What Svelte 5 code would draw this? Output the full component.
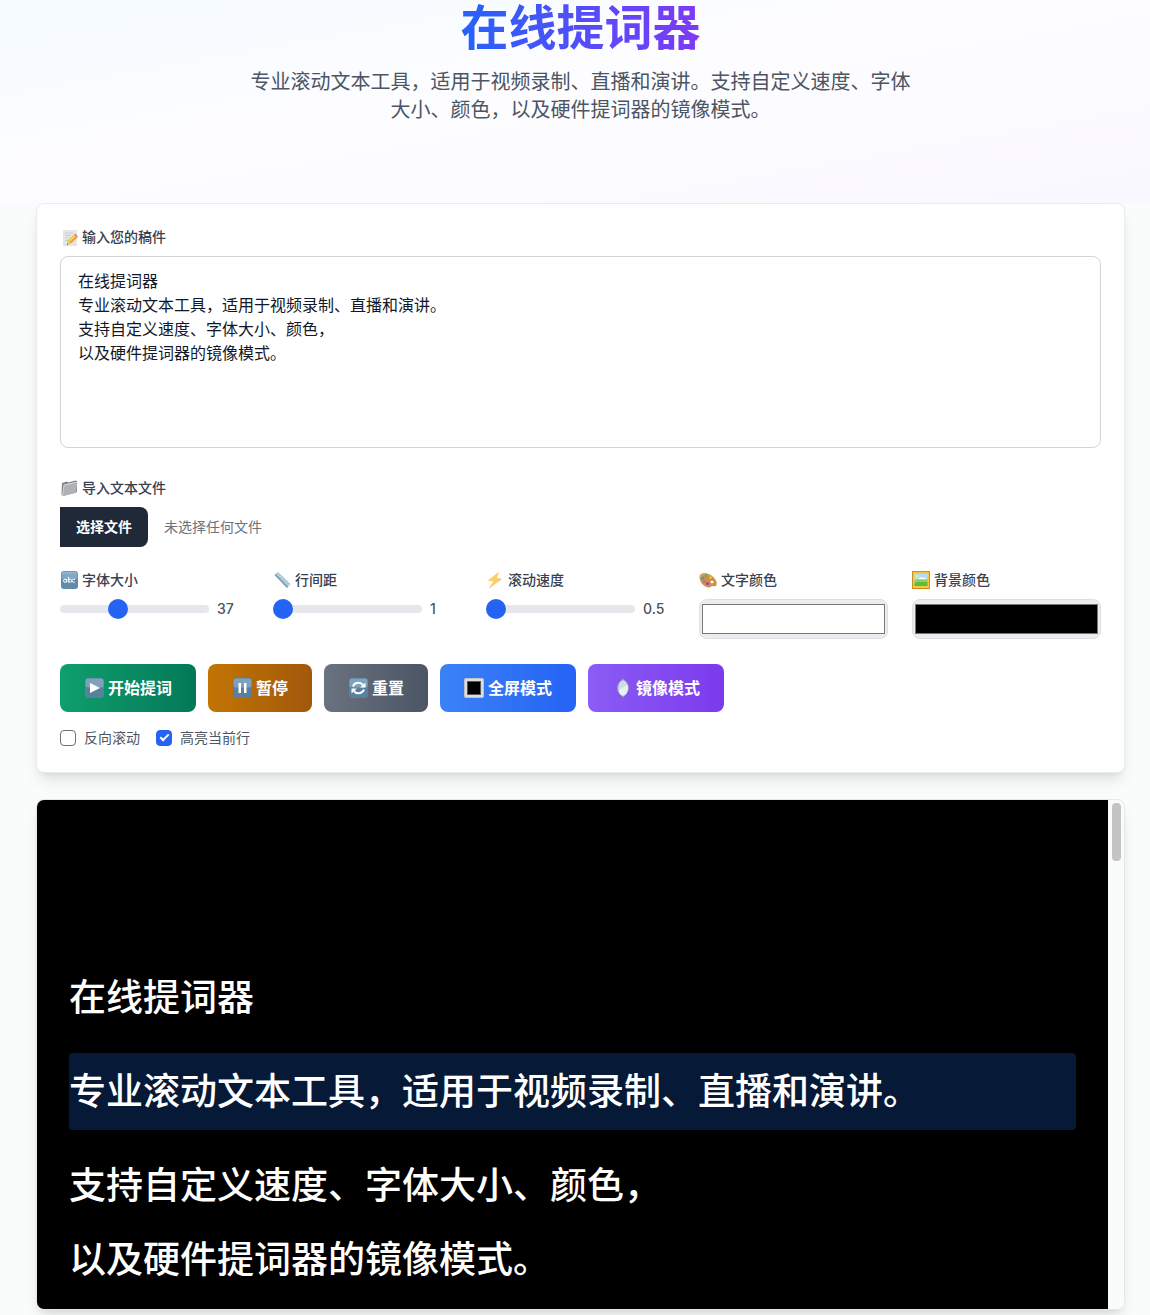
<script>
  let script = $state(
    "在线提词器\n专业滚动文本工具，适用于视频录制、直播和演讲。\n支持自定义速度、字体大小、颜色，\n以及硬件提词器的镜像模式。"
  );
  let fontSize = $state(37);
  let lineGap = $state(1);
  let speed = $state(0.5);
  let textColor = $state("#ffffff");
  let bgColor = $state("#000000");
  let reverse = $state(false);
  let highlight = $state(true);
  let mirrored = $state(false);
  let current = $state(1);
  let fileName = $state("");
  let fileInput;
  let prompter;
  let timer;

  let lines = $derived(script.split("\n"));

  function start() {
    pause();
    timer = setInterval(() => {
      prompter.scrollTop += reverse ? -speed : speed;
    }, 16);
  }

  function pause() {
    clearInterval(timer);
  }

  function reset() {
    pause();
    prompter.scrollTop = 0;
    current = 1;
  }

  async function loadFile(e) {
    const file = e.target.files[0];
    if (!file) return;
    fileName = file.name;
    script = await file.text();
  }
</script>

<header>
  <h1>在线提词器</h1>
  <p>
    专业滚动文本工具，适用于视频录制、直播和演讲。支持自定义速度、字体大小、颜色，以及硬件提词器的镜像模式。
  </p>
</header>

<main>
  <section class="card">
    <label class="label" for="script">
      <svg viewBox="0 0 18 18" aria-hidden="true">
        <path d="M3 2h14v16H3z" fill="#e4e5e7" />
        <path d="M5 5h8M5 7.500h6M5 10h4M5 12.500h3" stroke="#cdd0d3" />
        <path d="M7 16.500l1-4 6.500-6 3 3-6.500 6z" fill="#eda921" />
        <path d="M9 13.500l7-6.500" stroke="#fbd95f" stroke-width="1.500" />
        <path d="M14 6.800l1.500-1.300 2.500 3-1 1.300z" fill="#df8b82" />
        <path d="M7 16.500l1-3.800 2.800 2.800z" fill="#e5c9a1" />
        <path d="M6.800 17l.5-1.500 1 1z" fill="#444" />
      </svg>
      输入您的稿件
    </label>
    <textarea id="script" bind:value={script}></textarea>

    <label class="label" for="file">
      <svg viewBox="0 0 18 18" aria-hidden="true">
        <path d="M2 4l5-1.500 1 1L16 1.500l1 1V13L3 17l-1.500-1z" fill="#7c8085" />
        <path d="M4 5.500L17.500 2.500 16 14 2.500 17z" fill="#aeb1b5" />
        <path d="M4.500 6L17 3.200" stroke="#d9dbdd" />
        <path d="M4 5.500L2.500 17" stroke="#e1e2e4" stroke-width=".8" />
      </svg>
      导入文本文件
    </label>
    <div class="file-row">
      <button class="file-btn" onclick={() => fileInput.click()}>选择文件</button>
      <span>{fileName || "未选择任何文件"}</span>
      <input id="file" type="file" accept=".txt" hidden bind:this={fileInput} onchange={loadFile} />
    </div>

    <div class="settings">
      <div>
        <label class="label" for="size">
          <svg viewBox="0 0 18 18" aria-hidden="true">
            <rect x="1" y="0" width="17" height="18" rx="3" fill="#5f8bad" />
            <rect x="1.500" y=".5" width="16" height="8" rx="2.500" fill="#83a8c3" />
            <path d="M3 2h13" stroke="#bcd0de" stroke-dasharray="1 1" />
            <g fill="none" stroke="#fff">
              <circle cx="5" cy="9.800" r="1.500" />
              <path d="M6.800 8v3.500M8.600 6v5.500M15 8.800a1.600 1.600 0 1 0 0 2" />
              <circle cx="10.200" cy="9.800" r="1.500" />
            </g>
          </svg>
          字体大小
        </label>
        <div class="slider">
          <input id="size" type="range" min="16" max="72" bind:value={fontSize} />
          <output for="size">{fontSize}</output>
        </div>
      </div>

      <div>
        <label class="label" for="gap">
          <svg viewBox="0 0 18 18" aria-hidden="true">
            <path d="M1.500 4L5 1l12.500 12-3.500 4z" fill="#a9c6d9" />
            <path d="M1.500 4L14 17l1-1.200L2.700 3z" fill="#7f9fb5" />
            <path
              d="M6 3l-1.500 1.500M8 5L7 6M10 7L8.500 8.500M12 9l-1 1M14 11l-1.500 1.500M16 13l-1 1"
              stroke="#d7e7f1"
              stroke-width=".8"
            />
          </svg>
          行间距
        </label>
        <div class="slider">
          <input id="gap" type="range" min="1" max="3" step="0.1" bind:value={lineGap} />
          <output for="gap">{lineGap}</output>
        </div>
      </div>

      <div>
        <label class="label" for="speed">
          <svg viewBox="0 0 18 18" aria-hidden="true">
            <path
              d="M12.500 1.500L2.500 9.500l5.500.5-4.500 7L15.500 8l-5.300-.4z"
              fill="#fbd35c"
              stroke="#f3bd63"
              stroke-width=".6"
            />
          </svg>
          滚动速度
        </label>
        <div class="slider">
          <input id="speed" type="range" min="0.5" max="10" step="0.5" bind:value={speed} />
          <output for="speed">{speed}</output>
        </div>
      </div>

      <div>
        <label class="label" for="fg">
          <svg viewBox="0 0 18 18" aria-hidden="true">
            <path
              d="M.5 6C.5 2 6 .5 11 3.500c4.500 2.500 7.500 7 6.500 10.500-.7 2-2.500 1-4 1-1.400 0-1.500 1.500-3.500 1.500C5 16.500.5 11 .5 6z"
              fill="#d19049"
            />
            <path d="M1.500 6c.5-3 5-4 9-1.700" fill="none" stroke="#e6b67c" />
            <circle cx="3.800" cy="7" r="1.600" fill="#2aa9c4" />
            <circle cx="7.500" cy="4.600" r="1.700" fill="#56bd3f" />
            <circle cx="11.600" cy="6.500" r="1.300" fill="#f3c23c" />
            <circle cx="5.300" cy="10.500" r="1.200" fill="#d96a4a" />
            <circle cx="8.500" cy="12.500" r="1.500" fill="#7d45dd" />
            <ellipse cx="13" cy="11" rx="1.500" ry="1.200" fill="#fff" />
          </svg>
          文字颜色
        </label>
        <input id="fg" type="color" bind:value={textColor} />
      </div>

      <div>
        <label class="label" for="bg">
          <svg viewBox="0 0 18 18" aria-hidden="true">
            <path d="M0 0h18v18H0z" fill="#d08f17" />
            <path d="M1 1h16v16H1z" fill="#f6c744" />
            <path d="M2.500 3h13v12h-13z" fill="#b8dcf2" />
            <path d="M2.500 9c4-2 9 1 13-1v7h-13z" fill="#8ad05a" />
            <path d="M2.500 12c5-2 9 0 13-1v4h-13z" fill="#62bd35" />
            <path d="M7 8c0-2 3-2.500 4-1 1.500-.7 3 0 3 1z" fill="#fff" />
            <circle cx="5" cy="5.500" r="1.300" fill="#fbe17a" />
          </svg>
          背景颜色
        </label>
        <input id="bg" type="color" bind:value={bgColor} />
      </div>
    </div>

    <div class="actions">
      <button class="green" onclick={start}>
        <svg viewBox="0 0 20 20" aria-hidden="true">
          <rect x="1" y="0" width="19" height="20" rx="3" fill="#58809f" />
          <rect x="1.500" y=".5" width="18" height="9" rx="2.500" fill="#7fa1bb" />
          <path d="M6 5l10 5-10 5z" fill="#fff" />
        </svg>
        开始提词
      </button>
      <button class="amber" onclick={pause}>
        <svg viewBox="0 0 20 20" aria-hidden="true">
          <rect x="1" y="0" width="19" height="20" rx="3" fill="#58809f" />
          <rect x="1.500" y=".5" width="18" height="9" rx="2.500" fill="#7fa1bb" />
          <path d="M6.500 5h2.500v10H6.500zM12 5h2.500v10H12z" fill="#fff" />
        </svg>
        暂停
      </button>
      <button class="gray" onclick={reset}>
        <svg viewBox="0 0 20 20" aria-hidden="true">
          <rect x="1" y="0" width="19" height="20" rx="3" fill="#58809f" />
          <rect x="1.500" y=".5" width="18" height="9" rx="2.500" fill="#7fa1bb" />
          <path
            d="M5 8.500C6.500 4 12.500 3.500 15 7M16 11.500C14.500 16 8 16.500 6 13"
            fill="none"
            stroke="#fff"
            stroke-width="2"
          />
          <path d="M17.500 4.500v5H12zM3.500 15.500v-5H9z" fill="#fff" />
        </svg>
        重置
      </button>
      <button class="blue" onclick={() => prompter.requestFullscreen()}>
        <svg viewBox="0 0 20 20" aria-hidden="true">
          <rect width="20" height="20" rx="2" fill="#bfc1c3" />
          <rect x="1" y="1" width="18" height="18" rx="1" fill="#dcdddf" />
          <rect x="3" y="3" width="14" height="14" fill="#55585c" />
          <rect x="4" y="4" width="12" height="12" fill="#000" />
        </svg>
        全屏模式
      </button>
      <button class="purple" onclick={() => (mirrored = !mirrored)}>
        <svg viewBox="0 0 20 20" aria-hidden="true">
          <path
            d="M11 0l2 2.800C15.700 5 17 7.500 17 10s-1.300 5-4 7.200L11 20l-2-2.800C6.300 15 5 12.500 5 10s1.300-5 4-7.200z"
            fill="#a59b91"
          />
          <ellipse cx="11" cy="10" rx="4.800" ry="7.800" fill="#c8dcf0" />
          <path d="M6.500 12.500l9-6c1 4 .3 8-2.500 10.500-3 1.500-5.500-.5-6.500-4.500z" fill="#e7eff8" />
        </svg>
        镜像模式
      </button>
    </div>

    <div class="options">
      <label><input type="checkbox" bind:checked={reverse} />反向滚动</label>
      <label><input type="checkbox" bind:checked={highlight} />高亮当前行</label>
    </div>
  </section>

  <section class="stage">
    <div
      class="prompter"
      class:mirrored
      bind:this={prompter}
      style:background={bgColor}
      style:color={textColor}
      style:font-size={fontSize + "px"}
      style:line-height={lineGap}
    >
      {#each lines as line, i}
        <p class:current={highlight && i === current}>{line}</p>
      {/each}
    </div>
    <div class="track"><div class="thumb"></div></div>
  </section>
</main>

<style>
  :global(body) {
    margin: 0;
    background: #fafcfc;
    color: #1f2937;
    font-family: Inter, "Noto Sans CJK SC", sans-serif;
  }
  header {
    padding: 4px 25px 79px 36px;
    text-align: center;
    background: linear-gradient(to bottom right, #f5fbff, #fdfdff 45%, #faf8ff);
  }
  h1 {
    width: fit-content;
    margin: 0 auto 16px;
    font-size: 48px;
    line-height: 48px;
    font-weight: 700;
    color: transparent;
    background: linear-gradient(to right, #2563fb, #8039f5);
    background-clip: text;
    -webkit-background-clip: text;
  }
  header p {
    max-width: 672px;
    margin: 0 auto;
    font-size: 20px;
    line-height: 28px;
    color: #4b5563;
  }
  main {
    display: flex;
    flex-direction: column;
    gap: 26px;
    padding: 0 25px 6px 36px;
  }
  .card {
    padding: 23px 23px 24px;
    background: #fff;
    border: 1px solid #e9ebee;
    border-radius: 8px;
    box-shadow:
      0 10px 15px -3px rgba(0, 0, 0, 0.1),
      0 4px 6px -4px rgba(0, 0, 0, 0.1);
  }
  .label {
    display: flex;
    align-items: center;
    gap: 4px;
    margin-bottom: 9px;
    font-size: 14px;
    line-height: 20px;
    font-weight: 500;
    color: #374151;
  }
  .label svg {
    width: 18px;
    height: 18px;
    fill: none;
  }
  textarea {
    display: block;
    box-sizing: border-box;
    width: 100%;
    height: 192px;
    margin-bottom: 30px;
    padding: 12px 17px;
    border: 1px solid #d1d5db;
    border-radius: 8px;
    background: #fff;
    color: #111827;
    font-family: inherit;
    font-size: 16px;
    line-height: 24px;
    resize: none;
  }
  .file-row {
    display: flex;
    align-items: center;
    gap: 16px;
    font-size: 14px;
    line-height: 20px;
    color: #6b7280;
  }
  .file-btn {
    padding: 10px 16px;
    border: 0;
    border-radius: 0 8px 8px 0;
    background: #1f2937;
    color: #fff;
    font-family: inherit;
    font-size: 14px;
    line-height: 20px;
    font-weight: 700;
  }
  .settings {
    display: grid;
    grid-template-columns: repeat(5, 1fr);
    gap: 24px;
    margin: 23px 0 25px;
  }
  .slider {
    display: flex;
    align-items: center;
    gap: 8px;
    height: 20px;
  }
  output {
    width: 32px;
    font-size: 14px;
    line-height: 20px;
    font-weight: 500;
    color: #4b5563;
  }
  input[type="range"] {
    flex: 1;
    min-width: 0;
    height: 8px;
    margin: 0;
    border-radius: 8px;
    background: #e5e7eb;
    appearance: none;
  }
  input[type="range"]::-webkit-slider-thumb {
    width: 20px;
    height: 20px;
    border-radius: 50%;
    background: #2563f5;
    appearance: none;
  }
  input[type="color"] {
    display: block;
    box-sizing: border-box;
    width: 100%;
    height: 40px;
    padding: 0;
    border: 1px solid #dcdfe3;
    border-radius: 8px;
    background: #ebedee;
  }
  .actions {
    display: flex;
    flex-wrap: wrap;
    gap: 12px;
    margin-bottom: 16px;
  }
  .actions button {
    display: flex;
    align-items: center;
    gap: 4px;
    padding: 12px 24px;
    border: 0;
    border-radius: 8px;
    color: #fff;
    font-family: inherit;
    font-size: 16px;
    line-height: 24px;
    font-weight: 700;
  }
  .actions svg {
    width: 20px;
    height: 20px;
  }
  .green {
    background: linear-gradient(to right, #0f9f6e, #047857);
  }
  .amber {
    background: linear-gradient(to right, #c27503, #a1580c);
  }
  .gray {
    background: linear-gradient(to right, #6b7280, #4b5563);
  }
  .blue {
    background: linear-gradient(to right, #3b82f6, #2563f5);
  }
  .purple {
    background: linear-gradient(to right, #8b5cf6, #7c3aed);
  }
  .options {
    display: flex;
    gap: 16px;
    font-size: 14px;
    line-height: 20px;
    color: #4b5563;
  }
  .options label {
    display: flex;
    align-items: center;
    gap: 8px;
  }
  input[type="checkbox"] {
    box-sizing: border-box;
    width: 16px;
    height: 16px;
    margin: 0;
    border: 1px solid #6b7280;
    border-radius: 4px;
    background: #fff;
    appearance: none;
  }
  input[type="checkbox"]:checked {
    display: grid;
    place-items: center;
    border-color: #2563f5;
    background: #2563f5;
  }
  input[type="checkbox"]:checked::before {
    content: "";
    width: 9px;
    height: 5px;
    margin-bottom: 3px;
    border: solid #fff;
    border-width: 0 0 2px 2px;
    box-sizing: border-box;
    transform: rotate(-45deg);
  }
  .stage {
    display: flex;
    overflow: hidden;
    border: 1px solid #e5e7eb;
    border-radius: 8px;
    box-shadow:
      0 10px 15px -3px rgba(0, 0, 0, 0.1),
      0 4px 6px -4px rgba(0, 0, 0, 0.1);
  }
  .prompter {
    display: flex;
    flex: 1;
    flex-direction: column;
    gap: 37px;
    overflow: hidden;
    padding: 179px 32px 31px;
    font-weight: 500;
  }
  .mirrored {
    transform: scaleX(-1);
  }
  .prompter p {
    margin: 0;
  }
  .current {
    padding: 20px 0;
    border-radius: 4px;
    background: #061937;
  }
  .track {
    box-sizing: border-box;
    width: 16px;
    padding: 3px 3px 3px 4px;
    background: #fafcfc;
  }
  .thumb {
    height: 58px;
    border-radius: 4px;
    background: #c4c4c5;
  }
</style>
